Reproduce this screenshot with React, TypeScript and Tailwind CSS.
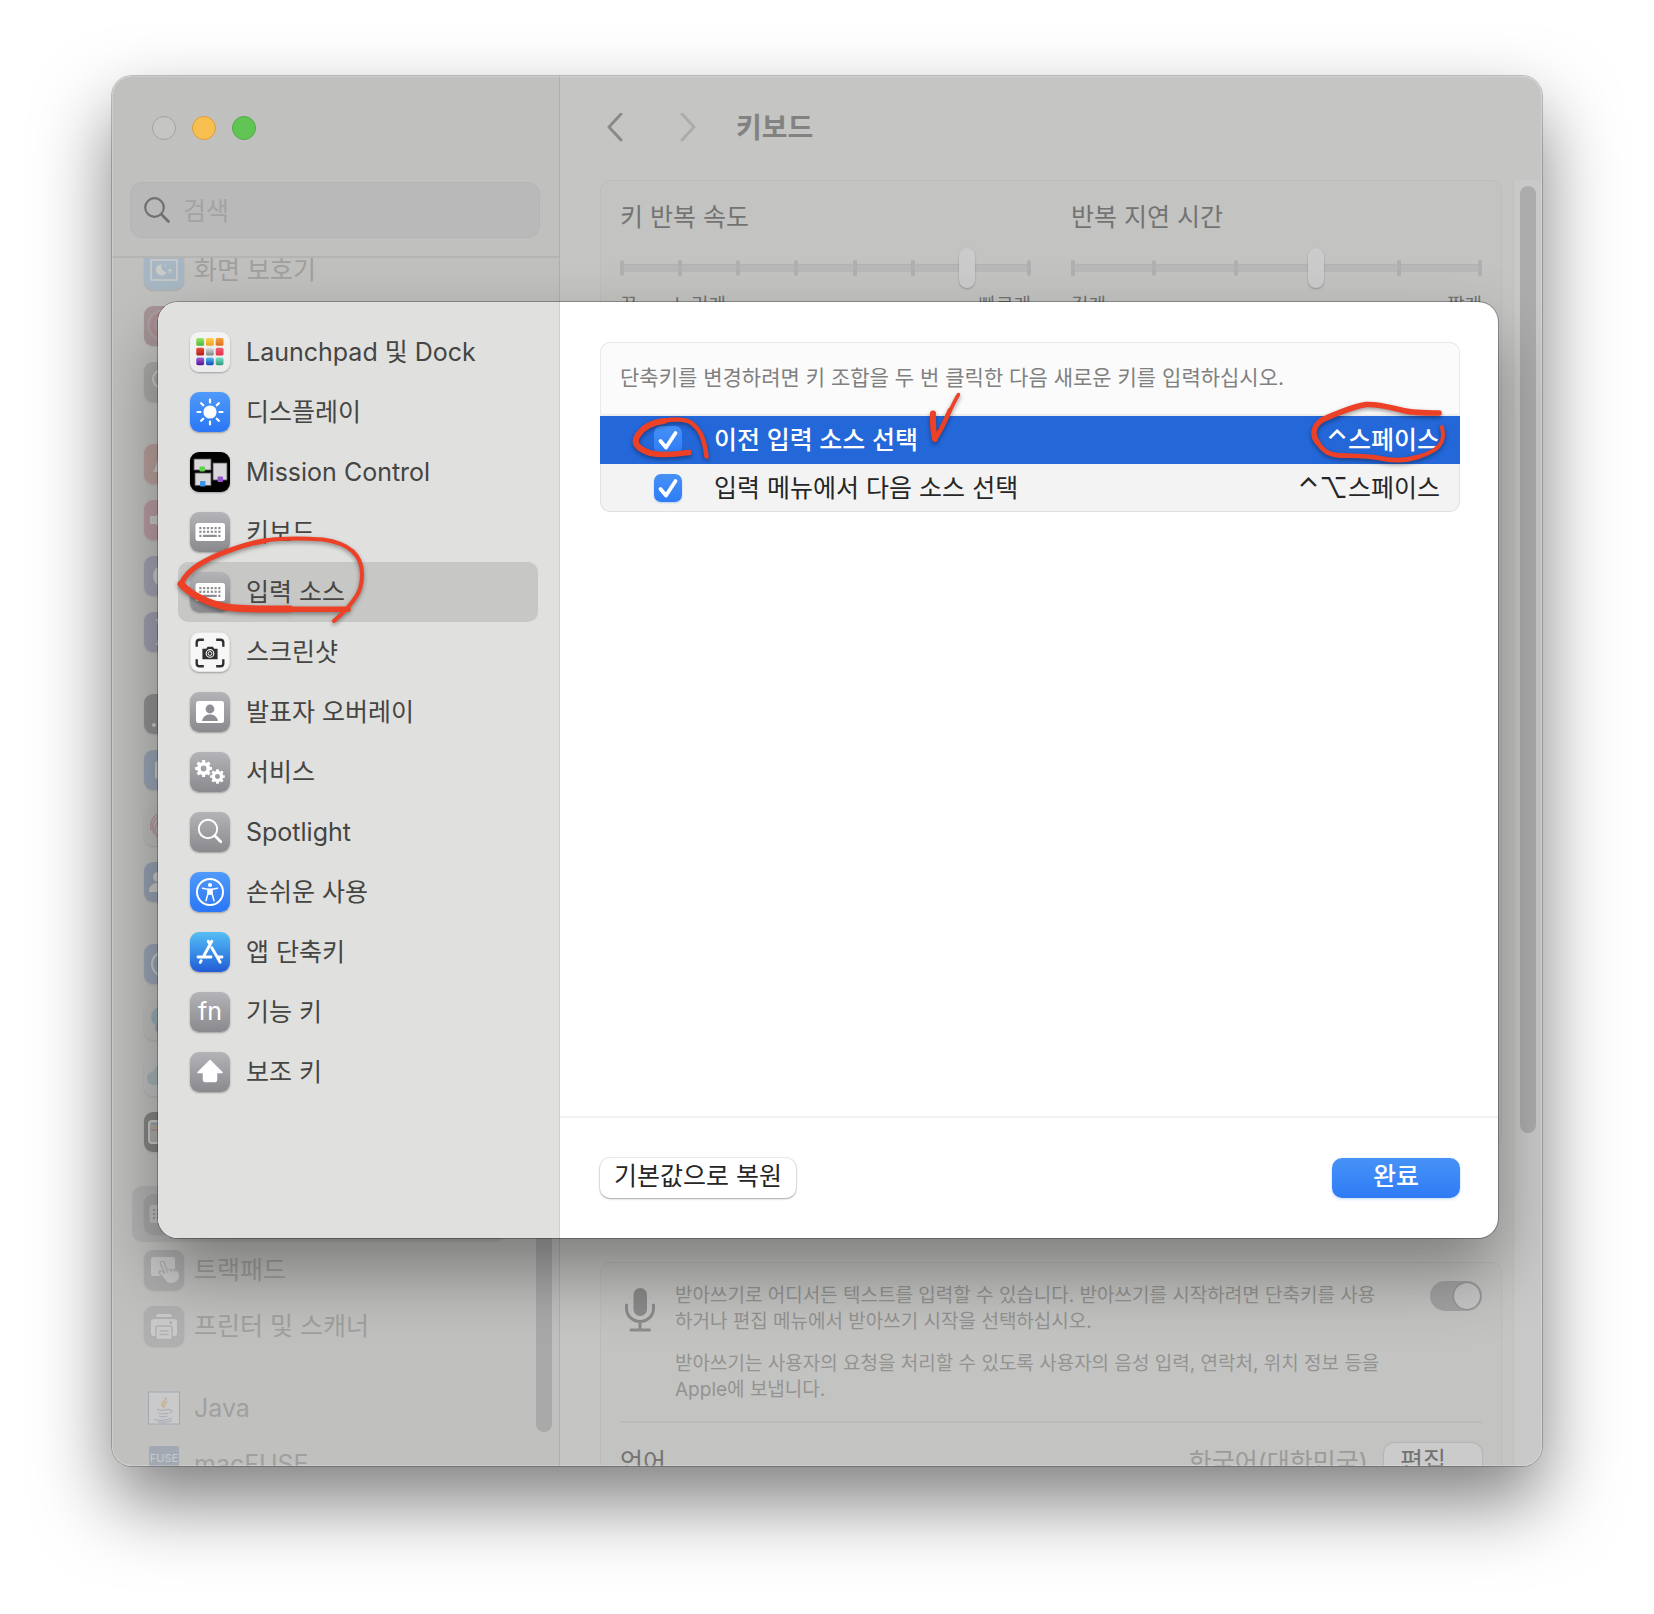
import React from "react";

const Tile = ({ tone, children }: { tone: string; children?: React.ReactNode }) => (
  <span className={`flex size-10 shrink-0 overflow-hidden rounded-[9px] shadow-[0_1px_2px_rgba(0,0,0,0.3)] ${tone}`}>
    <svg viewBox="0 0 40 40" className="size-10" fill="none" aria-hidden="true">
      {children}
    </svg>
  </span>
);

const GRAY = "bg-linear-to-b from-[#b4b3b8] to-[#8a898e]";
const BLUE = "bg-linear-to-b from-[#4f9af9] to-[#2a76f6]";

const KeyboardGlyph = () => (
  <>
    <rect x="5.5" y="11" width="29.500" height="18" rx="2.500" fill="#fff" />
    {[15, 18.7].map((y) =>
      [9.3, 13.1, 16.9, 20.7, 24.5, 28.3].map((x) => (
        <rect key={`${x}-${y}`} x={x} y={y} width="2.200" height="2.200" fill="#8f8e93" />
      )),
    )}
    <path d="M9.300 22.700h2.200v2.200h-2.200zM13 22.700h13.800v2.200H13zM28.300 22.700h2.200v2.200h-2.200z" fill="#8f8e93" />
  </>
);

const Gear = ({ cx, cy, r }: { cx: number; cy: number; r: number }) => (
  <g stroke="#fff">
    <circle cx={cx} cy={cy} r={r * 0.64} strokeWidth={r * 0.5} />
    {[0, 45, 90, 135, 180, 225, 270, 315].map((a) => (
      <path key={a} d={`M${cx} ${cy - r * 0.78}V${cy - r * 1.14}`} strokeWidth={r * 0.42} transform={`rotate(${a} ${cx} ${cy})`} />
    ))}
  </g>
);

const LAUNCH_COLORS = [
  ["#9be86f", "#4bb52e"], ["#fbd04a", "#f0a020"], ["#f5a33c", "#dd6f1c"],
  ["#e8503c", "#b01c16"], ["#dfe4e6", "#7c8285"], ["#f0607a", "#e23044"],
  ["#a45ee0", "#54158e"], ["#4fc4f5", "#1446b8"], ["#79e0cf", "#349a78"],
];

const LaunchpadIcon = () => (
  <Tile tone="bg-linear-to-b from-[#f4f4f4] to-[#ebebeb]">
    <defs>
      {LAUNCH_COLORS.map(([a, b], i) => (
        <linearGradient key={i} id={`lp${i}`} x1="0" y1="0" x2="0" y2="1">
          <stop stopColor={a} />
          <stop offset="1" stopColor={b} />
        </linearGradient>
      ))}
    </defs>
    {LAUNCH_COLORS.map((_, i) => (
      <rect key={i} x={6.3 + (i % 3) * 9.7} y={6 + Math.floor(i / 3) * 9.7} width="7.800" height="7.800" rx="1.600" fill={`url(#lp${i})`} />
    ))}
  </Tile>
);

const SunIcon = () => (
  <Tile tone={BLUE}>
    <circle cx="20" cy="20" r="6.600" fill="#fff" />
    {[0, 45, 90, 135, 180, 225, 270, 315].map((a) => (
      <path key={a} d="M20 7.500v3" stroke="#fff" strokeWidth="2.200" strokeLinecap="round" transform={`rotate(${a} 20 20)`} />
    ))}
  </Tile>
);

const MissionIcon = () => (
  <Tile tone="bg-black">
    <g fill="#d9d7d9" stroke="#555" strokeWidth=".8">
      <rect x="4" y="7" width="17" height="11" />
      <rect x="23" y="11" width="14" height="17" />
      <rect x="5" y="21" width="16" height="12.500" />
    </g>
    <rect x="9.500" y="14.500" width="5.500" height="5" rx="1" fill="#62cf4a" />
    <rect x="27.500" y="24.500" width="5.500" height="5.500" rx="1" fill="#9455cf" />
    <rect x="10" y="29" width="5.500" height="5.500" rx="1" fill="#3b93ea" />
  </Tile>
);

const KeyboardIcon = () => (
  <Tile tone={GRAY}>
    <KeyboardGlyph />
  </Tile>
);

const ScreenshotIcon = () => (
  <Tile tone="bg-[#f7f7f7] border border-[#e4e4e4]">
    <path d="M6 13.500V9a3 3 0 0 1 3-3h4.500M26.500 6H31a3 3 0 0 1 3 3v4.500M34 26.500V31a3 3 0 0 1-3 3h-4.500M13.500 34H9a3 3 0 0 1-3-3v-4.500" stroke="#2f2f2f" strokeWidth="2.500" />
    <path d="M12 15.500h4l1.500-2h5.500l1.500 2H28v11H12z" fill="#2f2f2f" />
    <circle cx="20" cy="20.500" r="4" stroke="#f7f7f7" strokeWidth="1.200" />
    <circle cx="20" cy="20.500" r="2" stroke="#f7f7f7" strokeWidth="1" />
  </Tile>
);

const PresenterIcon = () => (
  <Tile tone={GRAY}>
    <rect x="6" y="9" width="28" height="22" rx="2.500" fill="#fff" />
    <circle cx="20" cy="17" r="4.400" fill="#8f8e93" />
    <path d="M12 29c1-5 4.500-6.500 8-6.500s7 1.500 8 6.500z" fill="#8f8e93" />
  </Tile>
);

const ServicesIcon = () => (
  <Tile tone={GRAY}>
    <Gear cx={13.6} cy={16.5} r={7.4} />
    <Gear cx={27.5} cy={24.5} r={6.4} />
  </Tile>
);

const SpotlightIcon = () => (
  <Tile tone={GRAY}>
    <circle cx="18" cy="17" r="9.200" stroke="#fff" strokeWidth="1.900" />
    <path d="m24.800 23.800 6 6" stroke="#fff" strokeWidth="2.700" strokeLinecap="round" />
  </Tile>
);

const AccessIcon = () => (
  <Tile tone={BLUE}>
    <circle cx="20" cy="20" r="13" stroke="#fff" strokeWidth="2" />
    <circle cx="20" cy="13" r="2.100" fill="#fff" />
    <path d="M12.500 16.200 18 17.300v4.200l-2 7.200M27.500 16.200 22 17.300v4.200l2 7.200" stroke="#fff" strokeWidth="1.500" strokeLinecap="round" />
    <path d="M17.600 16.600h4.800v6.200h-4.800z" fill="#fff" />
  </Tile>
);

const AppStoreIcon = () => (
  <Tile tone="bg-linear-to-b from-[#56bdf2] via-[#3a8fe8] to-[#235bd6]">
    <g stroke="#fff" strokeWidth="2.900" strokeLinecap="round">
      <path d="M21.800 9.200 14 23.500M18.200 9.200l1.800 3M21.800 15.800l8.400 14.400M8 25h13M27.500 25H32M11.200 28.800l-.900 1.600" />
    </g>
  </Tile>
);

const FnIcon = () => (
  <span className={`flex size-10 shrink-0 items-center justify-center rounded-[9px] pb-0.5 text-[25px] leading-none text-white shadow-[0_1px_2px_rgba(0,0,0,0.3)] ${GRAY}`}>fn</span>
);

const ShiftIcon = () => (
  <Tile tone={GRAY}>
    <path d="M20 8.500 32 20.500h-5.500V28a1.500 1.500 0 0 1-1.500 1.500H15a1.500 1.500 0 0 1-1.500-1.500v-7.500H8z" fill="#fff" stroke="#fff" strokeWidth="1.500" strokeLinejoin="round" />
  </Tile>
);

const CATEGORIES = [
  { name: "Launchpad 및 Dock", icon: <LaunchpadIcon /> },
  { name: "디스플레이", icon: <SunIcon /> },
  { name: "Mission Control", icon: <MissionIcon /> },
  { name: "키보드", icon: <KeyboardIcon /> },
  { name: "입력 소스", icon: <KeyboardIcon />, selected: true },
  { name: "스크린샷", icon: <ScreenshotIcon /> },
  { name: "발표자 오버레이", icon: <PresenterIcon /> },
  { name: "서비스", icon: <ServicesIcon /> },
  { name: "Spotlight", icon: <SpotlightIcon /> },
  { name: "손쉬운 사용", icon: <AccessIcon /> },
  { name: "앱 단축키", icon: <AppStoreIcon /> },
  { name: "기능 키", icon: <FnIcon /> },
  { name: "보조 키", icon: <ShiftIcon /> },
];

const Ink = ({ box, place, children }: { box: string; place: string; children: React.ReactNode }) => (
  <svg viewBox={box} className={`pointer-events-none absolute z-10 drop-shadow-[0_2px_2px_rgba(0,0,0,0.4)] ${place}`} fill="none" stroke="#ec4127" strokeLinecap="round" strokeLinejoin="round" aria-hidden="true">
    {children}
  </svg>
);

const Dim = ({ tone, children }: { tone: string; children?: React.ReactNode }) => (
  <span className={`flex size-10 shrink-0 overflow-hidden rounded-[9px] shadow-[0_1px_2px_rgba(0,0,0,0.12)] ${tone}`}>
    <svg viewBox="0 0 40 40" className="size-10" fill="none" stroke="#cbcbca" strokeWidth="2" aria-hidden="true">
      {children}
    </svg>
  </span>
);

type Pane = { label: string; shown?: boolean; selected?: boolean; icon: React.ReactNode };

const PANES: Pane[][] = [
  [
    {
      label: "화면 보호기", shown: true,
      icon: (
        <Dim tone="bg-[#a6b7c3]">
          <rect x="7" y="10" width="26" height="20" strokeWidth="1.500" />
          <path d="M18 14.500a5.500 5.500 0 1 0 4.500 7.500 5 5 0 0 1-4.500-7.500z" fill="#cbcbca" stroke="none" />
          <path d="M26 18v5M23.500 20.500h5M21.500 14.500v2" strokeWidth="1.200" />
        </Dim>
      ),
    },
    { label: "Siri", icon: <Dim tone="bg-[#a08b8e]"><circle cx="19" cy="19" r="15" strokeWidth="1" stroke="#b3a3a6" /><circle cx="19" cy="19" r="11" strokeWidth="2" stroke="#a97b84" /></Dim> },
    { label: "Spotlight", icon: <Dim tone="bg-[#a5a5a5]"><circle cx="18" cy="17" r="9" /></Dim> },
  ],
  [
    { label: "알림", icon: <Dim tone="bg-[#b89994]"><path d="M9 28c4-4 3-16 11-18v18z" fill="#cbcbca" stroke="none" /></Dim> },
    { label: "사운드", icon: <Dim tone="bg-[#b8949a]"><path d="M6 16h6l8-7v22l-8-7H6z" fill="#cbcbca" stroke="none" /></Dim> },
    { label: "집중 모드", icon: <Dim tone="bg-[#9b9bae]"><circle cx="20" cy="20" r="11" fill="#cbcbca" stroke="none" /></Dim> },
    { label: "스크린 타임", icon: <Dim tone="bg-[#9898ac]"><path d="M12 8h16M12 32h16M14 9c0 12 12 10 12 22M26 9c0 12-12 10-12 22" /></Dim> },
  ],
  [
    { label: "잠금 화면", icon: <Dim tone="bg-[#868686]"><circle cx="10" cy="31" r="2" fill="#cbcbca" stroke="none" /><circle cx="20" cy="31" r="2" fill="#cbcbca" stroke="none" /></Dim> },
    { label: "개인정보 보호", icon: <Dim tone="bg-[#909eb3]"><rect x="11" y="11" width="18" height="18" rx="3" fill="#cbcbca" stroke="none" /></Dim> },
    { label: "Touch ID 및 암호", icon: <Dim tone="bg-[#bdbdbb]"><g stroke="#b5898c" strokeWidth="1.500"><path d="M7 24c-1-6 1-12 6-16M10 28c-3-9 0-17 8-18M13 31c-4-9-1-17 7-17" /></g></Dim> },
    { label: "사용자 및 그룹", icon: <Dim tone="bg-[#8c9ab0]"><circle cx="14" cy="15" r="5" fill="#cbcbca" stroke="none" /><path d="M5 30c0-6 4-9 9-9s9 3 9 9z" fill="#cbcbca" stroke="none" /></Dim> },
  ],
  [
    { label: "인터넷 계정", icon: <Dim tone="bg-[#909eb3]"><circle cx="20" cy="20" r="12" /><circle cx="20" cy="20" r="5" /></Dim> },
    { label: "Game Center", icon: <Dim tone="bg-[#bebebd]"><circle cx="17" cy="17" r="10" fill="#8faab5" stroke="none" /><circle cx="17" cy="28" r="6" fill="#a58fb5" stroke="none" /></Dim> },
    { label: "iCloud", icon: <Dim tone="bg-[#bfc1c0]"><path d="M3 23a6 6 0 0 1 6-7 9 9 0 0 1 17-1v14H9a6 6 0 0 1-6-6z" fill="#9fb0b5" stroke="none" /></Dim> },
    { label: "지갑", icon: <Dim tone="bg-[#777776]"><rect x="5" y="9" width="30" height="22" rx="3" fill="#a9a9a7" /><path d="M7 12h28" stroke="#8d9aa8" /><path d="M7 15h28" stroke="#b1a27f" /><path d="M7 18h28" stroke="#a9877f" /></Dim> },
  ],
  [
    { label: "키보드", selected: true, icon: <Dim tone="bg-[#a3a3a3]"><rect x="5.500" y="11" width="29" height="18" rx="2.500" fill="#c0c0c0" stroke="none" /><path d="M9 16h22M9 20h22M9 24h22" strokeDasharray="2 2" stroke="#8f8f8f" /></Dim> },
    {
      label: "트랙패드", shown: true,
      icon: (
        <Dim tone="bg-[#adadad]">
          <rect x="7" y="7" width="24" height="19" rx="2" fill="#cacaca" stroke="none" />
          <path d="M17 11.500c1.500-1 3 0 3.500 1.500l2 6.500 9 .500c3 1 4.500 4 4 7-.500 4-4 6.500-8 6.500s-6-2-7.500-4.500l-5-6.500c0-2 2.500-2 4-.500l2 1.500-4.500-9.500c-.500-1 0-2 .500-2.500z" fill="#cacaca" stroke="#adadad" strokeWidth="1.200" />
          <path d="M22.500 19.500 24 23M26.500 19l1 3M30 19.500l1 3" stroke="#adadad" strokeWidth="1" />
        </Dim>
      ),
    },
    {
      label: "프린터 및 스캐너", shown: true,
      icon: (
        <Dim tone="bg-[#b0b0b0]">
          <path d="M12 11a3 3 0 0 1 3-3h10a3 3 0 0 1 3 3zM7 16a3 3 0 0 1 3-3h20a3 3 0 0 1 3 3v11a3 3 0 0 1-3 3H10a3 3 0 0 1-3-3z" fill="#cacaca" stroke="none" />
          <rect x="12" y="20" width="16" height="13.500" rx="1.500" fill="#cacaca" stroke="#b0b0b0" strokeWidth="1.500" />
          <path d="M15.500 25h9M15.500 28.500h9" stroke="#b0b0b0" strokeWidth="1.500" />
          <circle cx="27" cy="16.500" r="1.500" fill="#b0b0b0" stroke="none" />
        </Dim>
      ),
    },
  ],
  [
    {
      label: "Java", shown: true,
      icon: (
        <svg viewBox="0 0 40 40" className="size-10 shrink-0" fill="none" aria-hidden="true">
          <rect x="4.500" y="4" width="31" height="32" fill="#cacaca" stroke="#a2a8b3" />
          <path d="M22 9c1 4-5 5-4 8 .500 1.500 2 2 2 3.500M23.500 13.500c-3 1.500-3.500 3-2.500 5" stroke="#c9ab8c" strokeWidth="1.300" />
          <path d="M13 21.500c2 1.200 10 1 12-.500M25 22c4-1 4 2.500 0 3.500M14.500 25c2 1 7.500 1 9.500 0M15 28c2 1 6.500 1 8.500 0M11 30.500c-3 2 10 3 17-.500M14 34c5 .500 11 0 14-1.500" stroke="#a3a9b4" strokeWidth="1" />
        </svg>
      ),
    },
    {
      label: "macFUSE", shown: true,
      icon: (
        <span className="mx-[5px] flex h-9 w-[30px] shrink-0 items-start justify-center rounded-[2px] bg-[#a3a9b3] pt-1 text-[11px] leading-4 text-[#c9cacb]">FUSE</span>
      ),
    },
  ],
];

const SpeedSlider = ({ id, title, ticks, value, labels }: { id: string; title: string; ticks: number; value: number; labels: React.ReactNode }) => (
  <div>
    <label htmlFor={id} className="block text-[25px] leading-[34px] text-[#737372]">{title}</label>
    <div className="relative mt-3.5 flex h-10 items-center">
      <div className="absolute inset-x-0 flex h-4 items-center justify-between">
        <span className="absolute inset-x-0 h-2 rounded-sm border-t border-[#b2b2b1] bg-[#b8b8b8]" />
        {Array.from({ length: ticks }, (_, i) => (
          <span key={i} className="relative h-4 w-1 rounded-sm bg-[#b0b0b0]" />
        ))}
      </div>
      <input
        id={id}
        type="range"
        min={0}
        max={ticks - 1}
        defaultValue={value}
        className="relative h-10 w-full appearance-none bg-transparent [&::-webkit-slider-thumb]:h-10 [&::-webkit-slider-thumb]:w-4 [&::-webkit-slider-thumb]:appearance-none [&::-webkit-slider-thumb]:rounded-full [&::-webkit-slider-thumb]:bg-[#cbcbcb] [&::-webkit-slider-thumb]:shadow-[0_1px_2px_rgba(0,0,0,0.25)]"
      />
    </div>
    <div className="mt-1.5 flex justify-between text-[19px] leading-6 text-[#737372]">{labels}</div>
  </div>
);

const SHORTCUTS = [
  { id: "prev-source", name: "이전 입력 소스 선택", modifiers: "⌃", keys: "스페이스", selected: true },
  { id: "next-source", name: "입력 메뉴에서 다음 소스 선택", modifiers: "⌃⌥", keys: "스페이스", selected: false },
];

function BackSidebar() {
  return (
    <aside className="flex w-[448px] shrink-0 flex-col border-r border-[#b0b0b0] bg-[#c0c0be]">
      <div className="flex gap-4 pt-10 pl-10">
        <button aria-label="닫기" className="size-6 rounded-full border border-[#a3a3a3] bg-[#c5c5c4]" />
        <button aria-label="최소화" className="size-6 rounded-full border border-[#dd9f3c] bg-[#f7be50]" />
        <button aria-label="확대" className="size-6 rounded-full border border-[#4faa43] bg-[#61c555]" />
      </div>
      <label className="mt-[42px] mr-[19px] ml-[18px] flex h-14 items-center gap-3 rounded-xl border border-[#b4b4b5] bg-[#b9b9b9] pl-3">
        <svg viewBox="0 0 28 28" className="size-7 shrink-0" fill="none" stroke="#707070" strokeLinecap="round" aria-hidden="true">
          <circle cx="11.500" cy="11.500" r="9.300" strokeWidth="2.200" />
          <path d="m18.500 18.500 7 7" strokeWidth="2.800" />
        </svg>
        <input type="search" aria-label="검색" placeholder="검색" className="h-full w-full bg-transparent pt-0.5 text-[25px] text-[#737372] outline-none placeholder:text-[#a3a3a3]" />
      </label>
      <div className="mt-[18px] flex min-h-0 flex-1 overflow-hidden border-t-2 border-[#b4b4b3]">
        <nav className="-mt-4 flex flex-1 flex-col gap-[26px] pl-5">
          {PANES.map((group, g) => (
            <ul key={g}>
              {group.map((p) => (
                <li key={p.label}>
                  <button aria-label={p.label} className={`flex h-14 w-full items-center gap-2.5 rounded-[10px] px-3 text-[25px] text-[#a0a09f] ${p.selected ? "bg-[#b3b3b3]" : ""}`}>
                    <span className={p.shown ? "" : "opacity-80"}>{p.icon}</span>
                    {p.shown && <span className="pt-0.5">{p.label}</span>}
                  </button>
                </li>
              ))}
            </ul>
          ))}
        </nav>
        <div className="flex w-[53px] items-end justify-end pr-[7px] pb-[34px]">
          <div className="h-1/2 w-4 rounded-full bg-[#a9a9a9]" />
        </div>
      </div>
    </aside>
  );
}

function BackContent() {
  return (
    <main className="flex min-w-0 flex-1 flex-col bg-[#c5c5c3]">
      <header className="flex h-[104px] shrink-0 items-center pl-[47px]">
        <button aria-label="뒤로">
          <svg viewBox="0 0 16 30" className="h-[30px] w-4" fill="none" stroke="#8a8a8a" strokeWidth="3" strokeLinecap="round" strokeLinejoin="round"><path d="M14 1 2 14l12 13" /></svg>
        </button>
        <button aria-label="앞으로" className="ml-[57px]">
          <svg viewBox="0 0 16 30" className="h-[30px] w-4" fill="none" stroke="#acacab" strokeWidth="3" strokeLinecap="round" strokeLinejoin="round"><path d="M2 1l12 13L2 27" /></svg>
        </button>
        <h1 className="ml-10 text-[28px] font-bold text-[#828282]">키보드</h1>
      </header>
      <div className="flex min-h-0 flex-1">
        <div className="min-w-0 flex-1 overflow-hidden pr-[11px] pl-10">
          <section className="grid h-[968px] grid-cols-2 content-start gap-10 rounded-[10px] border border-[#bdbdbc] bg-[#c3c3c1] px-[19px] pt-[19px]">
            <SpeedSlider
              id="repeat-rate"
              title="키 반복 속도"
              ticks={8}
              value={6}
              labels={<><span className="flex gap-9"><span>끔</span><span>느리게</span></span><span>빠르게</span></>}
            />
            <SpeedSlider id="repeat-delay" title="반복 지연 시간" ticks={6} value={3} labels={<><span>길게</span><span>짧게</span></>} />
          </section>
          <section className="mt-[114px] rounded-[10px] border border-[#bcbcbb] bg-[#c3c3c1] px-[19px] pt-[18px]">
            <div className="flex items-start border-b-2 border-[#bbbbba] pb-[18px]">
              <svg viewBox="0 0 32 46" className="mt-1.5 ml-1 h-[46px] w-8 shrink-0" fill="none" stroke="#8b8b8b" strokeWidth="3" strokeLinecap="round" aria-hidden="true">
                <rect x="9.500" y="1" width="13.500" height="28" rx="6.700" fill="#8b8b8b" stroke="none" />
                <path d="M2.500 18v3.500a13.500 13 0 0 0 27 0V18M16 34.500v8M7 43h18.500" />
              </svg>
              <div className="ml-[19px] flex flex-1 flex-col gap-4 pt-0.5 text-[19px] leading-[26px] text-[#939392]">
                <p>받아쓰기로 어디서든 텍스트를 입력할 수 있습니다. 받아쓰기를 시작하려면 단축키를 사용<br />하거나 편집 메뉴에서 받아쓰기 시작을 선택하십시오.</p>
                <p>받아쓰기는 사용자의 요청을 처리할 수 있도록 사용자의 음성 입력, 연락처, 위치 정보 등을<br />Apple에 보냅니다.</p>
              </div>
              <input
                type="checkbox"
                role="switch"
                aria-label="받아쓰기"
                defaultChecked
                className="flex h-[30px] w-[52px] shrink-0 appearance-none items-center justify-end rounded-full bg-[#a3a3a3] px-0.5 before:size-[26px] before:rounded-full before:bg-[#c6c6c6] before:shadow-[0_0_2px_rgba(0,0,0,0.35)] before:content-['']"
              />
            </div>
            <div className="mt-5 flex h-10 items-center text-[25px]">
              <span className="text-[#737372]">언어</span>
              <span className="ml-auto text-[#9b9b9a]">한국어(대한민국)</span>
              <button className="ml-4 h-10 w-[98px] rounded-[10px] bg-[#cbcbcb] pb-1 pl-4 text-left leading-9 whitespace-nowrap text-[#737372] shadow-[0_0_2px_rgba(0,0,0,0.25)]">편집...</button>
            </div>
          </section>
        </div>
        <div className="flex w-[29px] shrink-0 items-start justify-center border-l border-[#bfbfbe] bg-[#c9c9c9] pt-1.5">
          <div className="h-[74%] w-4 rounded-full bg-[#acacac]" />
        </div>
      </div>
    </main>
  );
}

function ShortcutSheet() {
  return (
    <div role="dialog" aria-label="키보드 단축키" className="absolute top-[226px] right-11 bottom-[228px] left-[46px] flex rounded-[20px] bg-white shadow-[0_0_0_1px_rgba(0,0,0,0.28),0_34px_68px_rgba(0,0,0,0.36)]">
      <aside className="w-[402px] shrink-0 rounded-l-[20px] border-r border-[#cfcfcd] bg-[#e0e0de] pt-5 pr-[21px] pl-5">
        <ul>
          {CATEGORIES.map((c) => (
            <li key={c.name} className="relative">
              <button className={`flex h-[60px] w-full items-center gap-4 rounded-[10px] px-3 text-[25px] text-[#454543] ${c.selected ? "bg-[#c7c7c5]" : ""}`}>
                {c.icon}
                <span className="pt-0.5">{c.name}</span>
              </button>
              {c.selected && (
                <Ink box="168 530 200 100" place="-top-8 -left-2.5 h-[100px] w-[200px]">
                  <path d="M334 621C341 615 344 612 349 606C357 596 362 590 362 574C362 553 347 543 323 539.500C300 538 282 538 266 540.500" strokeWidth="4" />
                  <path d="M266 540.500C240 545 213 556 200 564C190 570 184 577 181 584" strokeWidth="5" />
                  <path d="M181 584C190 594 207 603 226 607C240 609.500 262 609 290 609" strokeWidth="7" />
                  <path d="M262 609.300H348" strokeWidth="5.500" />
                </Ink>
              )}
            </li>
          ))}
        </ul>
      </aside>
      <section className="flex min-w-0 flex-1 flex-col">
        <div className="flex-1 px-10 pt-10 pr-[38px]">
          <div className="rounded-[10px] bg-[#fbfbfb] shadow-[inset_0_0_0_1px_#e8e8e8]">
            <p className="flex h-[74px] items-center border-b-2 border-[#eeeeee] px-5 text-[21px] text-[#808080]">단축키를 변경하려면 키 조합을 두 번 클릭한 다음 새로운 키를 입력하십시오.</p>
            <table className="w-full border-collapse text-[25px]">
              <tbody>
                {SHORTCUTS.map((s) => (
                  <tr key={s.id} className={s.selected ? "bg-[#2467d8] font-medium text-white" : "text-[#262626]"}>
                    <td className={`relative h-12 w-[114px] p-0 pl-[54px] ${s.selected ? "" : "rounded-bl-[10px] bg-black/3"}`}>
                      <span className="relative block size-7">
                        <input id={s.id} type="checkbox" defaultChecked className="block size-7 appearance-none rounded-[7px] bg-linear-to-b from-[#4691f7] to-[#2e7bf6] shadow-[0_1px_2px_rgba(46,123,246,0.3)]" />
                        <svg viewBox="0 0 28 28" className="pointer-events-none absolute inset-0" fill="none" stroke="#fff" strokeWidth="3.800" strokeLinecap="round" strokeLinejoin="round" aria-hidden="true"><path d="m6.500 15 5.500 6.500L21.500 7" /></svg>
                      </span>
                      {s.selected && (
                        <>
                          <Ink box="625 405 95 65" place="-top-[11px] left-[25px] h-[65px] w-[95px]">
                            <path d="M689 452.500C678 454 662 456 650 453C638 449 632 443 638 435" strokeWidth="5.500" />
                            <path d="M650 453C638 449 632 443 638 435C644 426 655 422 664 421" strokeWidth="6" />
                            <path d="M664 421C673 419 684 419 690 422C699 428 704 436 706.500 456.500" strokeWidth="4.500" />
                          </Ink>
                          <Ink box="920 385 50 65" place="-top-[31px] left-80 h-[65px] w-[50px]">
                            <path d="M933 413.500C932.500 422 933 430 935 439" strokeWidth="6" />
                            <path d="M935 439C941 431 944 423 950 410" strokeWidth="4.500" />
                            <path d="M944 423C950 411 954 402 958.500 394.500" strokeWidth="3.500" />
                          </Ink>
                        </>
                      )}
                    </td>
                    <td className={`p-0 ${s.selected ? "" : "bg-black/3"}`}>
                      <label htmlFor={s.id} className="block leading-9">{s.name}</label>
                    </td>
                    <td className={`relative p-0 pr-5 text-right ${s.selected ? "" : "rounded-br-[10px] bg-black/3"}`}>
                      <kbd className="flex items-center justify-end font-['Inter','Noto_Sans_CJK_KR',sans-serif] leading-9">
                        <span className="text-[28px]">{s.modifiers}</span>
                        <span>{s.keys}</span>
                      </kbd>
                      {s.selected && (
                        <Ink box="1300 390 160 80" place="-top-[26px] right-0 h-20 w-40">
                          <path d="M1439 413C1425 413 1411 412.500 1403 410.500C1390 407.500 1380 404 1366 404.500C1352 407 1332 415 1322 420C1312 427 1312 436 1318 443" strokeWidth="5.500" />
                          <path d="M1318 443C1324 452 1330 455 1340 455.500C1356 456 1368 456 1379 458C1392 461 1405 461 1418 457" strokeWidth="4.800" />
                          <path d="M1418 457C1434 452 1443 446 1443 435C1443 431 1442 429 1442 427" strokeWidth="4" />
                        </Ink>
                      )}
                    </td>
                  </tr>
                ))}
              </tbody>
            </table>
          </div>
        </div>
        <footer className="flex items-center justify-between border-t-2 border-[#f1f1f1] py-10 pr-[38px] pl-10 text-[25px]">
          <button className="h-10 rounded-[10px] bg-white px-3.5 pb-1 leading-9 text-[#262626] shadow-[0_0_0_1px_rgba(0,0,0,0.07),0_1px_2px_rgba(0,0,0,0.3)]">기본값으로 복원</button>
          <button className="h-10 w-32 rounded-[10px] bg-linear-to-b from-[#4792f7] to-[#2e7bf6] pb-1 leading-9 font-medium text-white shadow-[0_1px_3px_rgba(46,123,246,0.3)]">완료</button>
        </footer>
      </section>
    </div>
  );
}

export default function App() {
  return (
    <div className="h-screen overflow-hidden bg-white px-28 pt-[76px] pb-[148px] font-['Inter','Noto_Sans_CJK_KR',sans-serif]">
      <div className="relative h-full rounded-[20px] shadow-[0_0_0_1px_rgba(0,0,0,0.22),0_36px_76px_rgba(0,0,0,0.5)]">
        <div className="relative flex h-full overflow-hidden rounded-[20px]">
          <BackSidebar />
          <BackContent />
          <ShortcutSheet />
          <div className="pointer-events-none absolute inset-0 rounded-[20px] shadow-[inset_0_0_0_1px_rgba(255,255,255,0.2)]" />
        </div>
      </div>
    </div>
  );
}
